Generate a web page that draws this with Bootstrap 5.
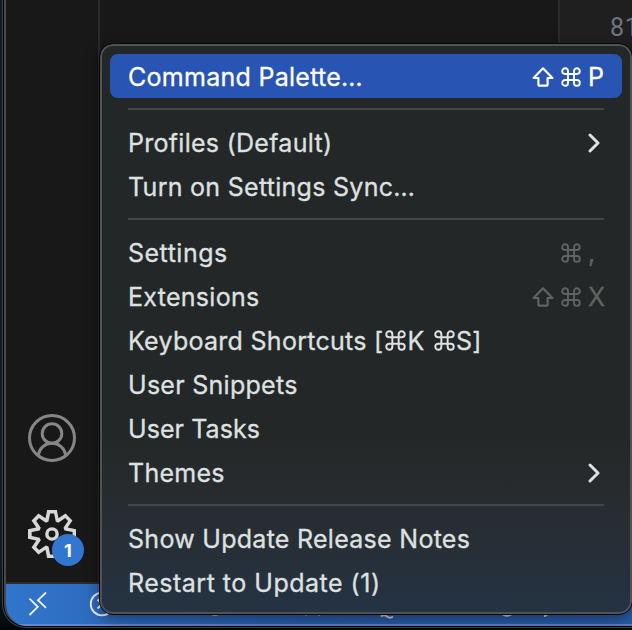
<!DOCTYPE html>
<html lang="en">
<head>
<meta charset="utf-8">
<title>Editor</title>
<link href="https://cdn.jsdelivr.net/npm/bootstrap@5.3.0/dist/css/bootstrap.min.css" rel="stylesheet">
<style>
html,body{height:630px;overflow:hidden}
body{background:#050b0f;font-family:Inter,"Liberation Sans",sans-serif}
.desk{width:632px;height:630px;padding-left:2px;background:linear-gradient(#131c28 0 560px,#07171b 600px,#030708)}
.frame{height:628px;border:1px solid #3a434c;border-width:0 0 1px 1px;border-radius:0 0 0 24px;background:#000;padding:0 0 1px 1px}
.win{height:626px;border-left:2px solid #484848;border-radius:0 0 0 22px;background:#181818;overflow:hidden}
.activity{width:94px;border-right:2px solid #2b2b2b;padding-bottom:24px}
.activity svg{display:block}
.side{width:460px;border-right:2px solid #2b2b2b}
.editor{background:#1f1f1f;color:#6e7681;font:25px/36px "Roboto","Liberation Sans",sans-serif;letter-spacing:.6px;padding-left:50px;white-space:nowrap;overflow:hidden}
.editor div{margin-top:10px}
.gear{width:48px;height:48px}
.count{left:24px;top:24px;width:32px;height:32px;background:#3276cf;color:#fff;font-size:18px;font-weight:700}
.status{height:44px;border-top:2px solid #2b2b2b;background:linear-gradient(90deg,#3176cc,#2a67b8 130px,#285aa3 330px,#285ca7)}
.status svg{display:block;width:100%;height:42px}
.menu-box{left:100px;top:44px;width:532px;height:570px;padding:8px;border:2px solid #505354;border-radius:13px;outline:1px solid #070707;background:linear-gradient(#232727 0 390px,#272b2e 440px,#272e34 490px,#243242 560px);color:#dfe0e0;box-shadow:0 4px 16px #0007}
.item{height:44px;padding:2px 18px 0;border-radius:8px;font-size:25px;line-height:42px;letter-spacing:.28px;white-space:nowrap;-webkit-text-stroke:.3px currentColor}
.item.picked{background:#2854b3;color:#fff}
.wide{letter-spacing:.5px}
.snug{letter-spacing:.08px}
.keys{gap:7px;margin-right:-1px}
.keys svg{display:block}
.key-p{width:17px}
.dim{color:#606363}
.rule{height:22px;padding:10px 18px}
.rule div{height:2px;background:#444748}
.cmd{width:21px;height:21px;vertical-align:-1px;margin:0 1px 0 2px}
</style>
<script src="https://cdn.jsdelivr.net/npm/bootstrap@5.3.0/dist/js/bootstrap.bundle.min.js"></script>
</head>
<body>
<svg class="d-none">
<symbol id="cmd" viewBox="0 0 20 20"><path d="M7 7H4.1A2.9 2.9 0 1 1 7 4.1V15.9A2.9 2.9 0 1 1 4.1 13H15.9A2.9 2.9 0 1 1 13 15.9V4.1A2.9 2.9 0 1 1 15.9 7Z" fill="none" stroke="currentColor" stroke-width="1.9"/></symbol>
<symbol id="shift" viewBox="0 0 22 20"><path d="M11 1.3L20.400 11H15.600V17.200Q15.600 18.700 14.100 18.700H7.900Q6.400 18.700 6.400 17.200V11H1.600Z" fill="none" stroke="currentColor" stroke-width="2.200" stroke-linejoin="round"/></symbol>
<symbol id="chev" viewBox="0 0 12 20"><path d="M2 2L10 10L2 18" fill="none" stroke="currentColor" stroke-width="3" stroke-linecap="round" stroke-linejoin="round"/></symbol>
</svg>
<div class="desk position-relative">
  <div class="frame">
    <div class="win d-flex flex-column">
      <div class="d-flex flex-grow-1">
        <div class="activity flex-shrink-0 d-flex flex-column justify-content-end align-items-center gap-5">
          <svg width="48" height="48" viewBox="0 0 48 48" fill="none" stroke="#868686" stroke-width="3"><circle cx="24" cy="24" r="22.5"/><circle cx="24" cy="19.5" r="9.8"/><path d="M10.200 41.500C11.400 34 17 29.300 24 29.300S36.600 34 37.800 41.500"/></svg>
          <div class="gear position-relative">
            <svg width="48" height="48" viewBox="0 0 24 24" fill="#d7d7d7"><path d="M19.85 8.75l4.15.83v4.84l-4.15.83 2.350 3.520-3.430 3.430-3.520-2.350-.83 4.150H9.580l-.83-4.150-3.520 2.350-3.430-3.430 2.350-3.520L0 14.420V9.580l4.150-.83L1.800 5.230 5.230 1.800l3.520 2.350L9.580 0h4.840l.83 4.150 3.520-2.350 3.430 3.430-2.350 3.520zm-1.570 5.070l4-.81v-2l-4-.81-.54-1.300 2.290-3.430-1.430-1.430-3.430 2.290-1.300-.54-.81-4h-2l-.81 4-1.300.54-3.430-2.290-1.430 1.430L6.380 8.900l-.54 1.300-4 .81v2l4 .81.54 1.300-2.290 3.430 1.430 1.430 3.430-2.290 1.300.54.81 4h2l.81-4 1.300-.54 3.430 2.290 1.430-1.430-2.290-3.430.54-1.300z"/><circle cx="12" cy="12" r="2.570" fill="none" stroke="#d7d7d7" stroke-width="1.720"/></svg>
            <span class="count position-absolute rounded-circle d-flex align-items-center justify-content-center">1</span>
          </div>
        </div>
        <div class="side flex-shrink-0"></div>
        <div class="editor flex-grow-1"><div>81</div></div>
      </div>
      <div class="status">
        <svg viewBox="6 584 626 42" preserveAspectRatio="none" fill="none" stroke="#eef3fa" stroke-width="1.800">
          <path d="M29.500 598.700L37.800 606.800L29.500 615M46 592.500L38 600.200L46 607.800"/>
          <circle cx="102" cy="604" r="11.300"/><path d="M97.500 599.500l9 9m0-9l-9 9"/>
          <g stroke="#c9d2dd"><circle cx="215" cy="604" r="10.800"/><path d="M306 615.500v-3M319 615.500v-3M381 616.500q3-2.500 6 0t6 0M502 614q5 3.500 10 0M544 616q3 0 4-3"/></g>
          <path d="M6 625H632" stroke="#88a8d6" stroke-opacity=".5" stroke-width="2"/>
        </svg>
      </div>
    </div>
  </div>
  <div class="menu-box position-absolute">
    <div class="item picked d-flex align-items-center"><span class="me-auto">Command Palette…</span><span class="keys d-flex align-items-center"><svg width="22" height="20"><use href="#shift"/></svg><svg width="20" height="20"><use href="#cmd"/></svg><span class="key-p">P</span></span></div>
    <div class="rule"><div></div></div>
    <div class="item d-flex align-items-center"><span class="me-auto">Profiles (Default)</span><svg width="12" height="20" class="me-1"><use href="#chev"/></svg></div>
    <div class="item"><span>Turn on Settings Sync…</span></div>
    <div class="rule"><div></div></div>
    <div class="item d-flex align-items-center"><span class="wide me-auto">Settings</span><span class="keys dim d-flex align-items-center"><svg width="20" height="20"><use href="#cmd"/></svg><span class="key-p">,</span></span></div>
    <div class="item d-flex align-items-center"><span class="me-auto">Extensions</span><span class="keys dim d-flex align-items-center"><svg width="22" height="20"><use href="#shift"/></svg><svg width="20" height="20"><use href="#cmd"/></svg><span class="key-p">X</span></span></div>
    <div class="item"><span>Keyboard Shortcuts [<svg class="cmd"><use href="#cmd"/></svg>K <svg class="cmd"><use href="#cmd"/></svg>S]</span></div>
    <div class="item"><span>User Snippets</span></div>
    <div class="item"><span class="snug">User Tasks</span></div>
    <div class="item d-flex align-items-center"><span class="me-auto">Themes</span><svg width="12" height="20" class="me-1"><use href="#chev"/></svg></div>
    <div class="rule"><div></div></div>
    <div class="item"><span>Show Update Release Notes</span></div>
    <div class="item"><span class="wide">Restart to Update (1)</span></div>
  </div>
</div>
</body>
</html>
